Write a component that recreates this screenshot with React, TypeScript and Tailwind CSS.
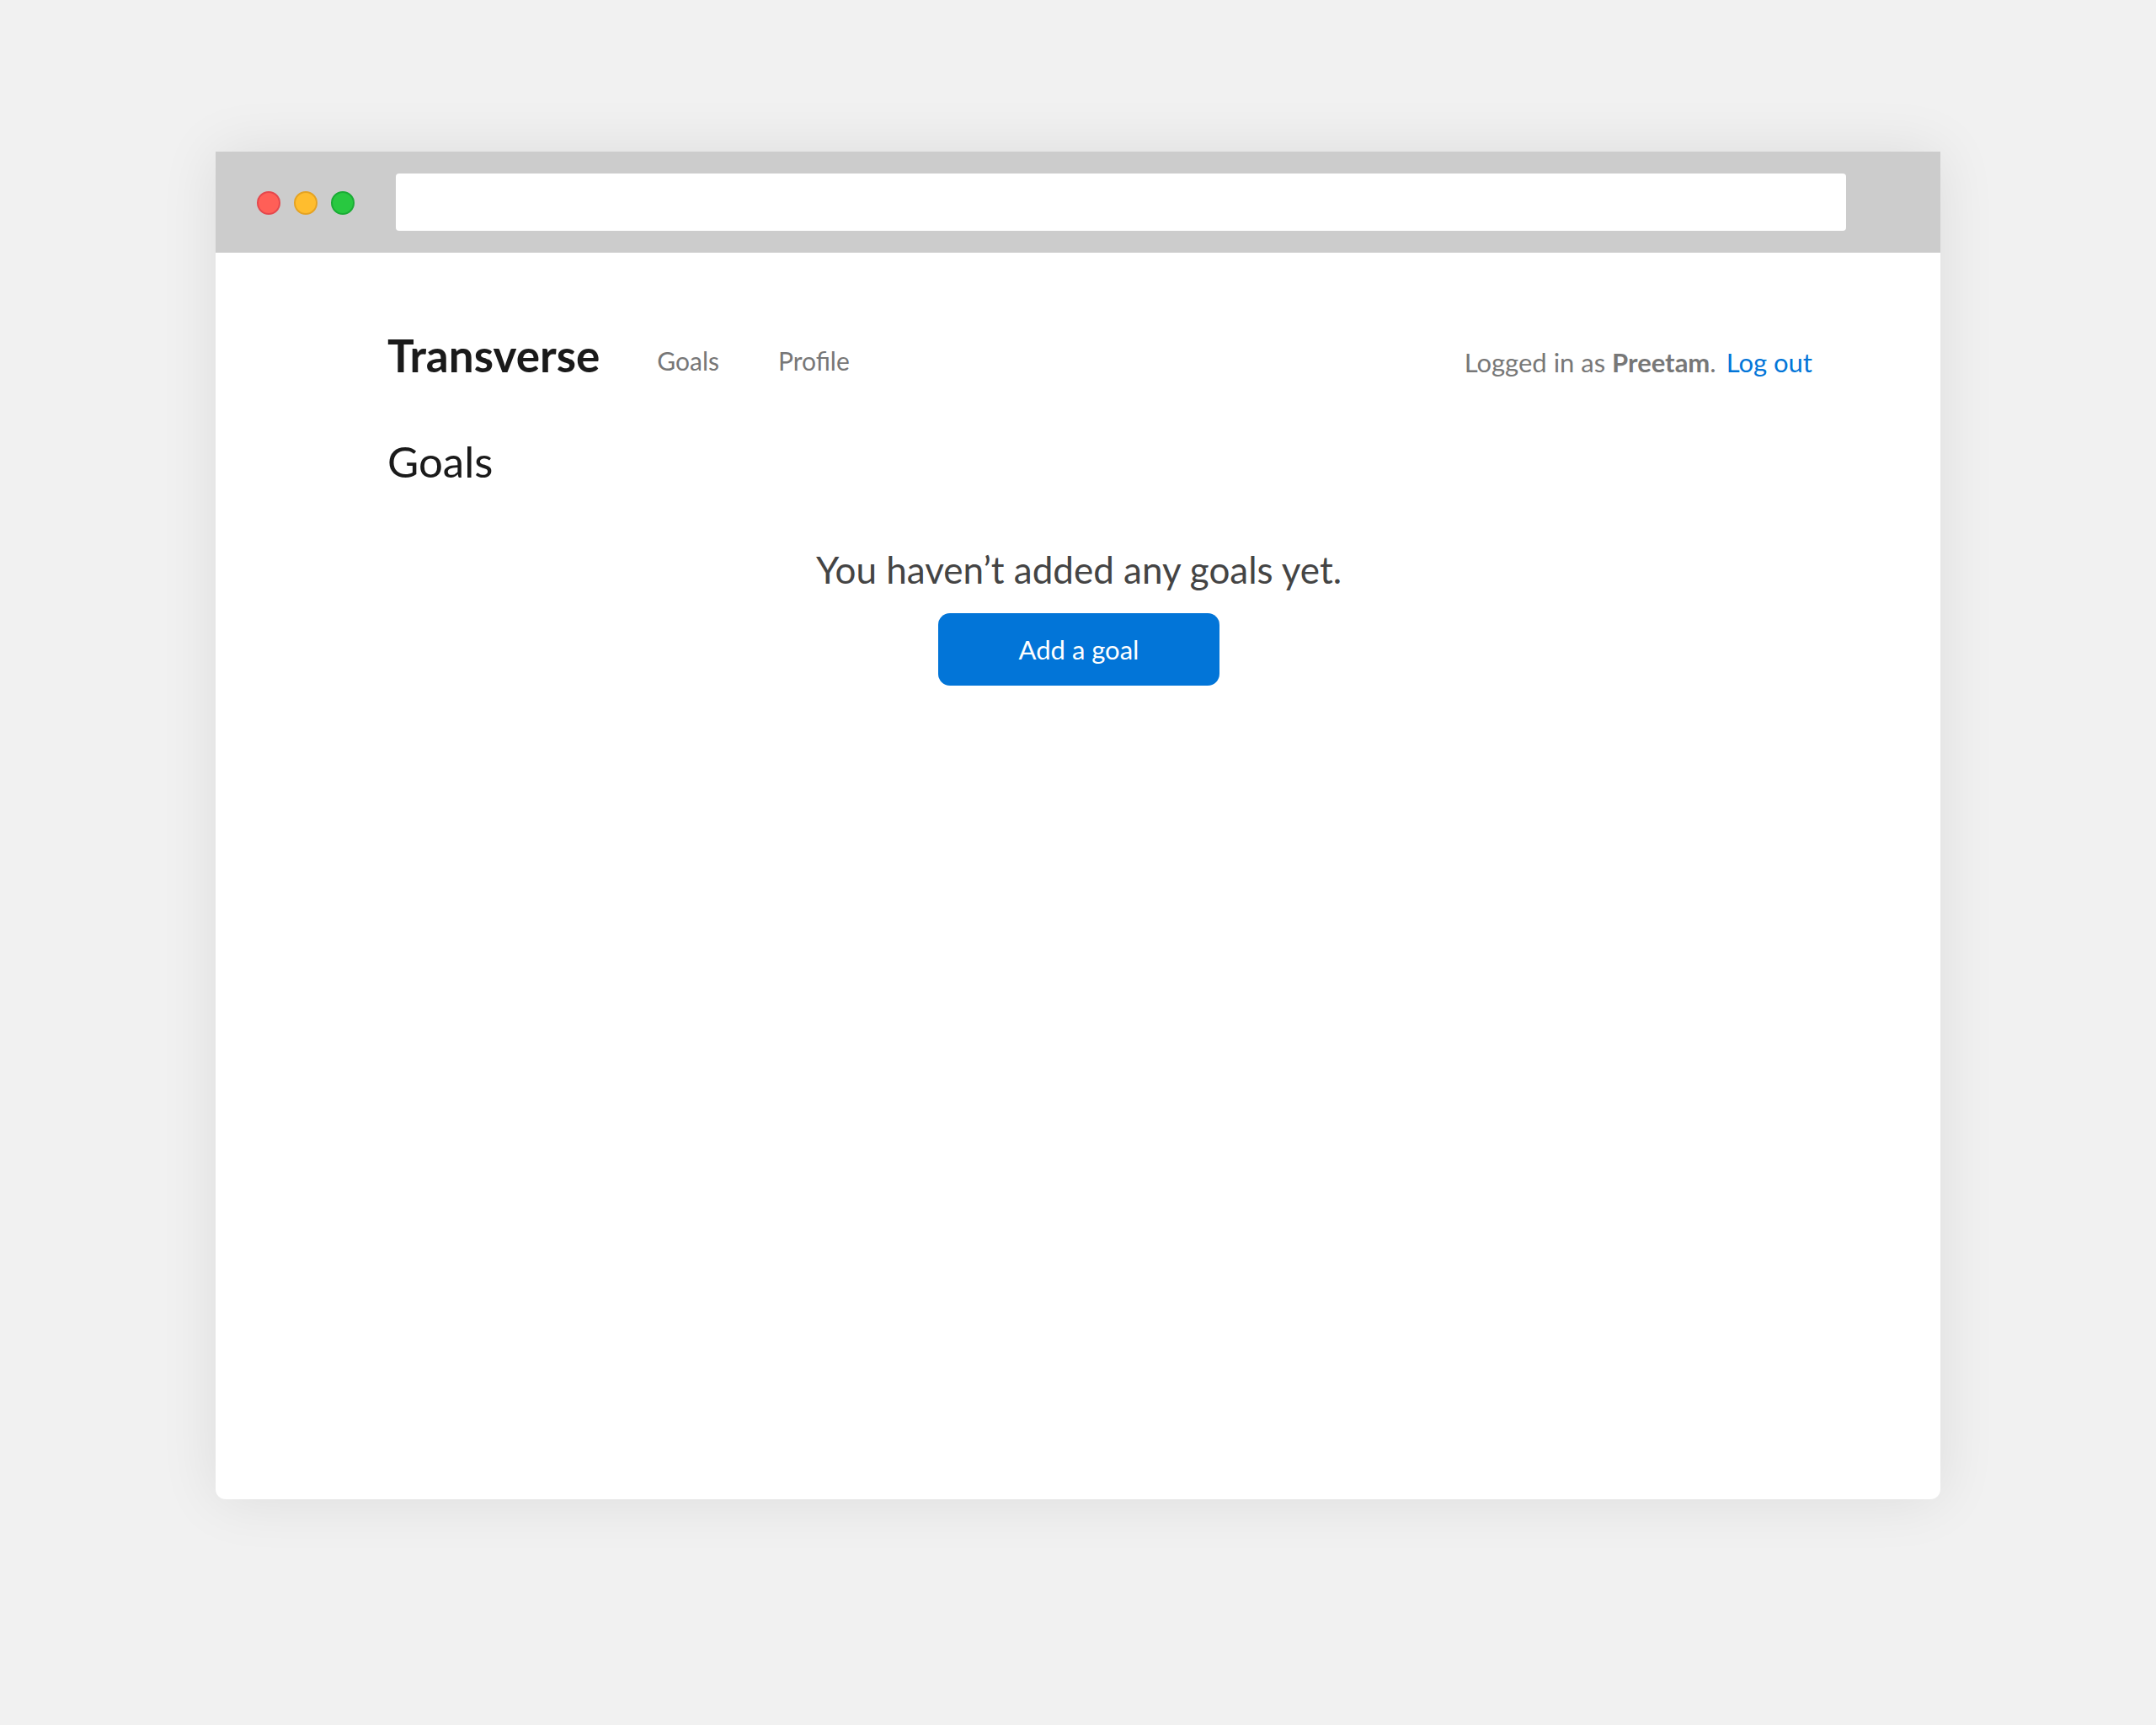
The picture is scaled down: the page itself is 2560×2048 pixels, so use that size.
export default function App() {
  return (
    <div className="min-h-[2048px] bg-[#f1f1f1] pt-[180px] pl-[256px] font-['Lato',sans-serif]">
      <div className="flex h-[1600px] w-[2048px] flex-col overflow-hidden rounded-b-[12px] bg-white shadow-[0_0_70px_rgba(0,0,0,0.09)]">
        <div className="flex h-[120px] shrink-0 items-center bg-[#cccccc] pl-[49px]">
          <div className="flex gap-[16px] pt-[2px]">
            <span className="size-[28px] rounded-full border-2 border-[#e5484d] bg-[#ff5f57]" />
            <span className="size-[28px] rounded-full border-2 border-[#e5a323] bg-[#ffbd2e]" />
            <span className="size-[28px] rounded-full border-2 border-[#1aac35] bg-[#28c840]" />
          </div>
          <div className="ml-[49px] h-[68px] w-[1722px] rounded-[4px] bg-white" />
        </div>

        <div className="pt-[92px] pl-[204px] pr-[152px]">
          <div className="flex h-[60px] items-center">
            <span className="text-[53px] leading-[60px] font-bold text-[#1a1a1a]">Transverse</span>
            <a className="mt-[12px] ml-[68px] text-[30px] text-[#777777]">Goals</a>
            <a className="mt-[12px] ml-[70px] text-[30px] text-[#777777]">Profile</a>
            <div className="mt-[17px] ml-auto text-[31px] text-[#777777]">
              Logged in as <b className="font-bold">Preetam</b>.<a className="ml-[12px] text-[#0275d8]">Log out</a>
            </div>
          </div>

          <h1 className="mt-[66px] text-[51px] leading-[60px] font-normal text-[#1a1a1a]">Goals</h1>

          <div className="mt-[74px] flex flex-col items-center pr-[50px]">
            <p className="text-[44px] leading-[48px] text-[#444444]">You haven’t added any goals yet.</p>
            <button className="mt-[28px] h-[86px] w-[334px] rounded-[14px] bg-[#0275d8] text-[31px] text-white">Add a goal</button>
          </div>
        </div>
      </div>
    </div>
  );
}
